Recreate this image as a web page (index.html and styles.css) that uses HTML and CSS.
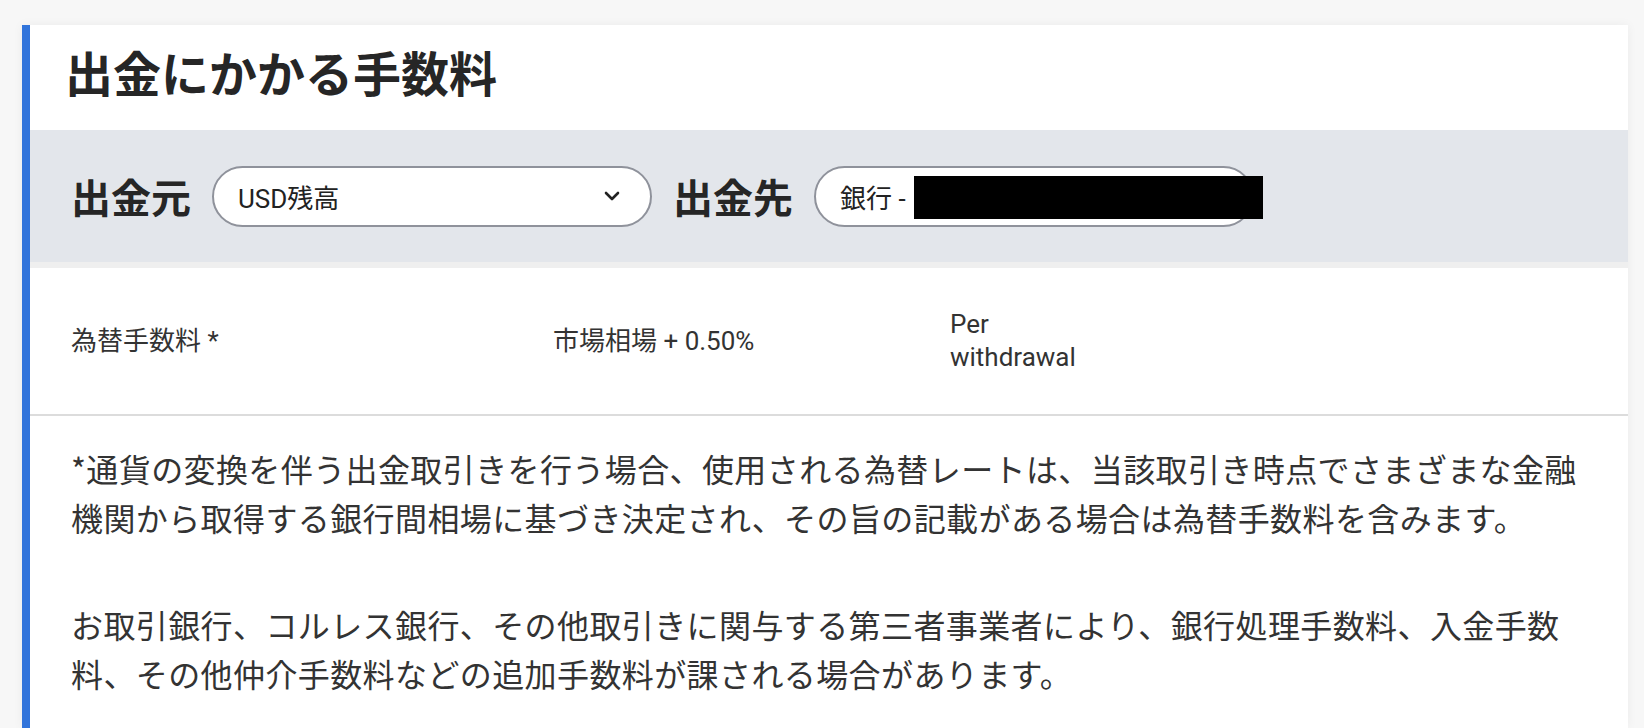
FILE: index.html
```html
<!DOCTYPE html>
<html lang="ja">
<head>
	<meta charset="UTF-8">
	<meta name="viewport" content="width=device-width, initial-scale=1.0">
	<title>出金にかかる手数料</title>
	<link rel="stylesheet" href="styles.css">
</head>
<body>
	<section class="page">
		<div class="fee_card">
			<h2 class="fee_title">出金にかかる手数料</h2>

			<div class="route">
				<span class="route_label">出金元</span>
				<div class="pill">
					<span class="pill_text grow">USD残高</span>
					<svg class="chevron" width="16" height="10" viewBox="0 0 16 10">
						<path d="M2 2 L8 8 L14 2" fill="none" stroke="#222" stroke-width="2.6" stroke-linecap="round" stroke-linejoin="round"/>
					</svg>
				</div>
				<span class="route_label">出金先</span>
				<div class="pill">
					<span class="pill_text">銀行 -</span>
					<span class="redact"></span>
				</div>
			</div>

			<div class="fee_row">
				<span>為替手数料 *</span>
				<span>市場相場 + 0.50%</span>
				<span>Per withdrawal</span>
			</div>

			<div class="notes">
				<p>*通貨の変換を伴う出金取引きを行う場合、使用される為替レートは、当該取引き時点でさまざまな金融機関から取得する銀行間相場に基づき決定され、その旨の記載がある場合は為替手数料を含みます。</p>
				<p>お取引銀行、コルレス銀行、その他取引きに関与する第三者事業者により、銀行処理手数料、入金手数料、その他仲介手数料などの追加手数料が課される場合があります。</p>
			</div>
		</div>
	</section>
</body>
</html>
```

FILE: styles.css
```css
*{margin:0; padding:0; box-sizing:border-box;}
body{
	background-color:#f7f7f7;
	font-family:"Noto Sans CJK JP", "Noto Sans", sans-serif;
	color:#333;
	overflow:hidden;
}
.page{
	height:100vh;
	padding:25px 16px 0 22px;
}
.fee_card{
	height:100%;
	background-color:#fff;
	border-left:8px solid #3174db;
	box-shadow:0 0 10px rgba(0,0,0,.05);
}
.fee_title{
	padding:14px 0 27px 35px;
	font-size:48px;
	line-height:64px;
	font-weight:700;
	color:#262626;
}
.route{
	display:flex;
	align-items:center;
	gap:21px;
	height:132px;
	padding-left:41px;
	background-color:#e3e6eb;
}
.route_label{
	font-size:40px;
	font-weight:700;
	color:#262626;
	white-space:nowrap;
}
.pill{
	display:flex;
	align-items:center;
	width:440px;
	height:61px;
	padding:0 30px 0 24px;
	background-color:#fff;
	border:2px solid #8f929b;
	border-radius:31px;
	font-family:Roboto, "Noto Sans CJK JP", sans-serif;
	font-size:26px;
	color:#222;
}
.pill_text{
	white-space:nowrap;
}
.grow{
	flex:1;
}
.redact{
	flex:none;
	width:349px;
	height:43px;
	margin-left:8px;
	margin-top:2px;
	background-color:#000;
}
.fee_row{
	display:grid;
	grid-template-columns:482px 397px 130px;
	align-items:center;
	height:154px;
	padding-left:41px;
	border-top:6px solid #efefef;
	border-bottom:2px solid #dcdcdc;
	font-family:Roboto, "Noto Sans CJK JP", sans-serif;
	font-size:26px;
	line-height:33px;
	color:#333;
}
.notes{
	padding:28px 27px 0 41px;
	font-size:32px;
	line-height:49px;
	letter-spacing:0.4px;
	color:#333;
}
.notes p{
	margin-bottom:58px;
}
```
